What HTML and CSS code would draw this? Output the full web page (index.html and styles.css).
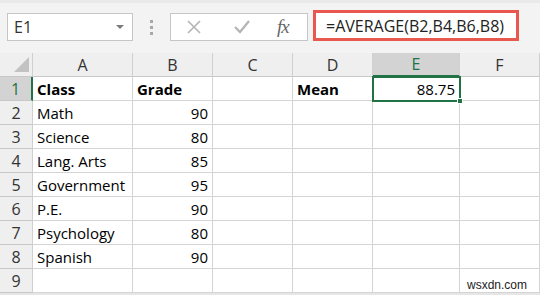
FILE: index.html
```html
<!DOCTYPE html>
<html lang="en">

<head>
    <meta charset="UTF-8">
    <meta name="viewport" content="width=device-width, initial-scale=1.0">
    <title>Grades - AVERAGE</title>
    <link rel="stylesheet" href="styles.css">
</head>

<body>
    <!-- Formula bar -->
    <div class="formula-bar">
        <div class="name-box">
            <span>E1</span>
            <span class="drop"></span>
        </div>
        <div class="grip">
            <span></span><span></span><span></span>
        </div>
        <div class="fx-box">
            <svg class="icon" width="14" height="14" viewBox="0 0 14 14">
                <path d="M1 1 L13 13 M13 1 L1 13" stroke="#b4b4b4" stroke-width="1.6" fill="none" />
            </svg>
            <svg class="icon" width="16" height="14" viewBox="0 0 16 14">
                <path d="M1 7 L6 12 L15 1" stroke="#b4b4b4" stroke-width="2.2" fill="none" />
            </svg>
            <span class="fx">fx</span>
        </div>
        <div class="formula-input">=AVERAGE(B2,B4,B6,B8)</div>
    </div>

    <!-- Sheet -->
    <div class="sheet">
        <div class="corner"><span class="tri"></span></div>
        <div class="col-head">A</div>
        <div class="col-head">B</div>
        <div class="col-head">C</div>
        <div class="col-head">D</div>
        <div class="col-head active">E</div>
        <div class="col-head">F</div>

        <div class="row-head active">1</div>
        <div class="cell bold">Class</div>
        <div class="cell bold">Grade</div>
        <div class="cell"></div>
        <div class="cell bold">Mean</div>
        <div class="cell num selected">88.75<span class="handle"></span></div>
        <div class="cell"></div>
    </div>

    <div class="watermark">wsxdn.com</div>

    <script>
        // Grade data
        const rows = [
            ["Math", 90],
            ["Science", 80],
            ["Lang. Arts", 85],
            ["Government", 95],
            ["P.E.", 90],
            ["Psychology", 80],
            ["Spanish", 90],
            ["", ""]
        ];

        const sheet = document.querySelector(".sheet");
        rows.forEach((row, index) => {
            let html = `<div class="row-head">${index + 2}</div>`;
            html += `<div class="cell">${row[0]}</div>`;
            html += `<div class="cell num">${row[1]}</div>`;
            html += `<div class="cell"></div><div class="cell"></div><div class="cell"></div><div class="cell"></div>`;
            sheet.insertAdjacentHTML("beforeend", html);
        });
    </script>
</body>

</html>
```

FILE: styles.css
```css
* {
    box-sizing: border-box;
    margin: 0;
    padding: 0;
}

body {
    width: 540px;
    height: 295px;
    overflow: hidden;
    background-color: #e6e6e6;
    font-family: "Open Sans", "Noto Sans", sans-serif;
    color: #000;
    position: relative;
}

/* Formula bar */
.formula-bar {
    height: 53px;
    background-color: #f3f3f3;
    border-top: 3px solid #e9e9e9;
    display: flex;
    align-items: flex-start;
    padding-top: 7px;
}

.name-box {
    margin-left: 7px;
    margin-top: 3px;
    width: 126px;
    height: 28px;
    background: white;
    border: 1px solid #c6c6c6;
    display: flex;
    align-items: center;
    justify-content: space-between;
    padding: 0 8px 0 6px;
    font-size: 16px;
    color: #333;
}

.drop {
    width: 0;
    height: 0;
    border-left: 4px solid transparent;
    border-right: 4px solid transparent;
    border-top: 4px solid #7a7a7a;
}

.grip {
    width: 37px;
    height: 28px;
    margin-top: 3px;
    display: flex;
    flex-direction: column;
    align-items: center;
    justify-content: center;
    gap: 3px;
}

.grip span {
    width: 3px;
    height: 3px;
    background-color: #a8a8a8;
}

.fx-box {
    width: 138px;
    height: 28px;
    margin-top: 3px;
    background: white;
    border: 1px solid #c6c6c6;
    display: flex;
    align-items: center;
    padding-left: 16px;
}

.fx-box .icon:nth-child(2) {
    margin-left: 33px;
}

.fx {
    margin-left: 27px;
    font-family: "Liberation Serif", serif;
    font-style: italic;
    font-size: 19px;
    color: #666;
    letter-spacing: -1px;
}

.formula-input {
    margin-left: 5px;
    width: 206px;
    height: 31px;
    background: white;
    border: 3px solid #e9584f;
    display: flex;
    align-items: center;
    padding-left: 10px;
    font-size: 16px;
    color: #222;
}

/* Sheet grid */
.sheet {
    display: grid;
    grid-template-columns: 33px 100px 80px 80px 80px 87px 80px;
    grid-template-rows: repeat(10, 24px);
    background-color: white;
    height: 240px;
}

.corner,
.col-head,
.row-head {
    background-color: #efefef;
    border-right: 1px solid #d0d0d0;
    border-bottom: 1px solid #c8c8c8;
    color: #333;
    font-size: 16px;
    display: flex;
    align-items: center;
    justify-content: center;
}

.corner {
    position: relative;
}

.tri {
    position: absolute;
    right: 3px;
    bottom: 4px;
    width: 0;
    height: 0;
    border-left: 15px solid transparent;
    border-bottom: 15px solid #c2c2c2;
}

.col-head.active,
.row-head.active {
    background-color: #d3d3d3;
    color: #217346;
}

.col-head.active {
    border-bottom: 2px solid #217346;
}

.row-head.active {
    border-right: 2px solid #217346;
}

.cell {
    border-right: 1px solid #d4d4d4;
    border-bottom: 1px solid #d4d4d4;
    font-size: 15px;
    display: flex;
    align-items: flex-end;
    padding: 0 4px 1px 4px;
    white-space: nowrap;
}

.cell.bold {
    font-weight: bold;
}

.cell.num {
    justify-content: flex-end;
}

.cell.selected {
    position: relative;
    outline: 2px solid #217346;
    outline-offset: -1px;
    z-index: 1;
}

.handle {
    position: absolute;
    right: -4px;
    bottom: -4px;
    width: 6px;
    height: 6px;
    background-color: #217346;
    border: 1px solid white;
}

.watermark {
    position: absolute;
    left: 467px;
    top: 278px;
    font-family: "Liberation Sans", Arial, sans-serif;
    font-size: 12px;
    color: #222;
}
```
